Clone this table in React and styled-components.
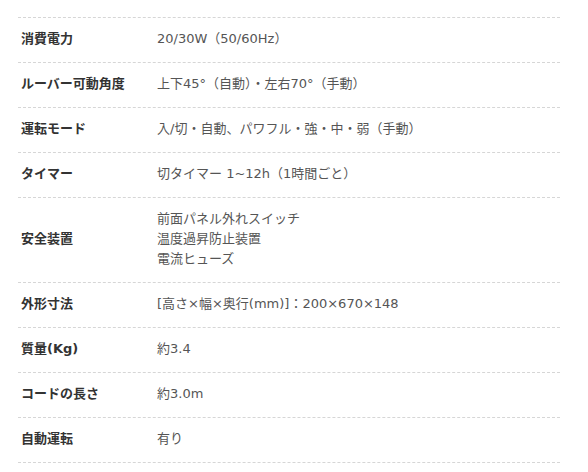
import React from 'react';
import styled, { createGlobalStyle } from 'styled-components';

const GlobalStyle = createGlobalStyle`
	html, body {
		margin: 0;
		padding: 0;
		background: #fff;
	}
	body {
		font-family: "DejaVu Sans", "Noto Sans CJK JP", sans-serif;
	}
`;

const SPECS = [
	{ label: '消費電力', value: ['20/30W（50/60Hz）'] },
	{ label: 'ルーバー可動角度', value: ['上下45°（自動）・左右70°（手動）'] },
	{ label: '運転モード', value: ['入/切・自動、パワフル・強・中・弱（手動）'] },
	{ label: 'タイマー', value: ['切タイマー 1~12h（1時間ごと）'] },
	{ label: '安全装置', value: ['前面パネル外れスイッチ', '温度過昇防止装置', '電流ヒューズ'] },
	{ label: '外形寸法', value: ['[高さ×幅×奥行(mm)]：200×670×148'] },
	{ label: '質量(Kg)', value: ['約3.4'] },
	{ label: 'コードの長さ', value: ['約3.0m'] },
	{ label: '自動運転', value: ['有り'] },
];

const SpecTable = styled.div`
	margin: 17px 28px 0 18px;
	border-top: 1px dashed #d6d6d6;
`;

const Row = styled.div`
	display: grid;
	grid-template-columns: 139px 1fr;
	align-items: center;
	padding: 11px 0 13px;
	border-bottom: 1px dashed #d6d6d6;
	font-size: 13px;
	line-height: 20px;
`;

const Label = styled.div`
	padding-left: 3px;
	font-weight: 700;
	color: #333;
`;

const Value = styled.div`
	color: #555;
`;

const Line = styled.div`
	white-space: nowrap;
`;

export default function App() {
	return (
		<>
			<GlobalStyle />
			<SpecTable>
				{SPECS.map((spec) => (
					<Row key={spec.label}>
						<Label>{spec.label}</Label>
						<Value>
							{spec.value.map((line) => (
								<Line key={line}>{line}</Line>
							))}
						</Value>
					</Row>
				))}
			</SpecTable>
		</>
	);
}
